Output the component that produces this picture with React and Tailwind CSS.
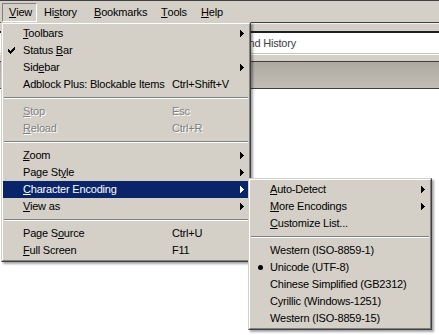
import React from 'react';

const Label = ({ text, k }) =>
  k == null ? text : (
    <>
      {text.slice(0, k)}
      <u>{text[k]}</u>
      {text.slice(k + 1)}
    </>
  );

const Arrow = ({ white }) => (
  <svg width="4" height="7" viewBox="0 0 4 7" shapeRendering="crispEdges" className="block">
    <path d="M0 0L4 3.5L0 7Z" fill={white ? '#ffffff' : '#000000'} />
  </svg>
);

const Check = () => (
  <svg width="7" height="7" viewBox="0 0 7 7" shapeRendering="crispEdges" className="block">
    <path d="M0 2h1v1h1v1h1v-1h1v-1h1v-1h1v-1h1v3h-1v1h-1v1h-1v1h-1v1h-1v-1h-1v-1h-1v-1h-1z" fill="#000" />
  </svg>
);

const Sep = () => (
  <div className="h-[10px] px-[1px] pt-[4px]">
    <div className="h-px bg-[#808080]" />
    <div className="h-px bg-white" />
  </div>
);

const Item = ({ text, k, shortcut, arrow, check, bullet, active, disabled, scX = 169 }) => (
  <div
    className={`relative flex h-[17px] items-center pl-[20px] pr-[5px] ${
      active ? 'bg-[#0a246a] text-white' : disabled ? 'text-[#808080] [text-shadow:1px_1px_0_#fff]' : 'text-black'
    }`}
  >
    {check && (
      <span className="absolute left-[5px] top-[5px]">
        <Check />
      </span>
    )}
    {bullet && <span className="absolute left-[8px] top-[6px] h-[5px] w-[5px] rounded-full bg-black" />}
    <span className="flex-1 whitespace-nowrap">
      <Label text={text} k={k} />
    </span>
    {shortcut && (
      <span className="absolute whitespace-nowrap" style={{ left: scX }}>
        {shortcut}
      </span>
    )}
    {arrow && <Arrow white={active} />}
  </div>
);

const Menu = ({ className, children }) => (
  <div
    className={`absolute border border-t-[#d4d0c8] border-l-[#d4d0c8] border-r-[#404040] border-b-[#404040] bg-[#d4d0c8] shadow-[2px_2px_2px_rgba(0,0,0,0.35)] ${className}`}
  >
    <div className="border border-t-white border-l-white border-r-[#808080] border-b-[#808080] py-px">
      {children}
    </div>
  </div>
);

const bar = [
  { t: 'View', k: 0, w: 'w-[35px]', on: true },
  { t: 'History', k: 2, w: 'w-[50px]' },
  { t: 'Bookmarks', k: 0, w: 'w-[67px]' },
  { t: 'Tools', k: 0, w: 'w-[40px]' },
  { t: 'Help', k: 0, w: 'w-[36px]' },
];

export default function App() {
  return (
    <div className="relative h-[335px] w-[439px] overflow-hidden bg-white font-['Liberation_Sans',Arial,sans-serif] text-[11px] tracking-[-0.2px] text-black">
      {/* menubar */}
      <div className="flex h-[22px] items-start border-t border-[#404040] bg-[#d4d0c8] pl-[2px] pt-[2px]">
        {bar.map((b) => (
          <div
            key={b.t}
            className={`flex h-[19px] items-center pl-[6px] ${b.w} ${
              b.on ? 'border border-t-[#808080] border-l-[#808080] border-r-white border-b-white' : 'border border-transparent'
            }`}
          >
            <Label text={b.t} k={b.k} />
          </div>
        ))}
      </div>

      {/* toolbar strip */}
      <div className="h-[9px] border-t border-[#404040] bg-[#d4d0c8] shadow-[inset_0_1px_0_#f4f2ee]" />
      <div className="flex h-[22px] items-center border-t-2 border-[#202020] bg-white pl-[150px] text-[#404040]">
        Search Bookmarks and History
      </div>
      <div className="h-[9px] border-t border-[#c8c4bc] border-b border-b-[#404040] bg-[#d4d0c8] shadow-[inset_0_1px_0_#ffffff]" />
      <div className="h-[27px] border-b border-[#404040] bg-gradient-to-b from-[#aeaaa2] to-[#c2beb6]" />

      {/* View menu */}
      <Menu className="left-[1px] top-[22px] w-[250px]">
        <Item text="Toolbars" k={0} arrow />
        <Item text="Status Bar" k={7} check />
        <Item text="Sidebar" k={3} arrow />
        <Item text="Adblock Plus: Blockable Items" shortcut="Ctrl+Shift+V" />
        <Sep />
        <Item text="Stop" k={0} shortcut="Esc" disabled />
        <Item text="Reload" k={0} shortcut="Ctrl+R" disabled />
        <Sep />
        <Item text="Zoom" k={0} arrow />
        <Item text="Page Style" k={7} arrow />
        <Item text="Character Encoding" k={0} arrow active />
        <Item text="View as" k={0} arrow />
        <Sep />
        <Item text="Page Source" k={6} shortcut="Ctrl+U" />
        <Item text="Full Screen" k={0} shortcut="F11" />
      </Menu>

      {/* Character Encoding submenu */}
      <Menu className="left-[248px] top-[178px] w-[184px]">
        <Item text="Auto-Detect" k={0} arrow />
        <Item text="More Encodings" k={0} arrow />
        <Item text="Customize List..." k={0} />
        <Sep />
        <Item text="Western (ISO-8859-1)" />
        <Item text="Unicode (UTF-8)" bullet />
        <Item text="Chinese Simplified (GB2312)" />
        <Item text="Cyrillic (Windows-1251)" />
        <Item text="Western (ISO-8859-15)" />
      </Menu>
    </div>
  );
}
